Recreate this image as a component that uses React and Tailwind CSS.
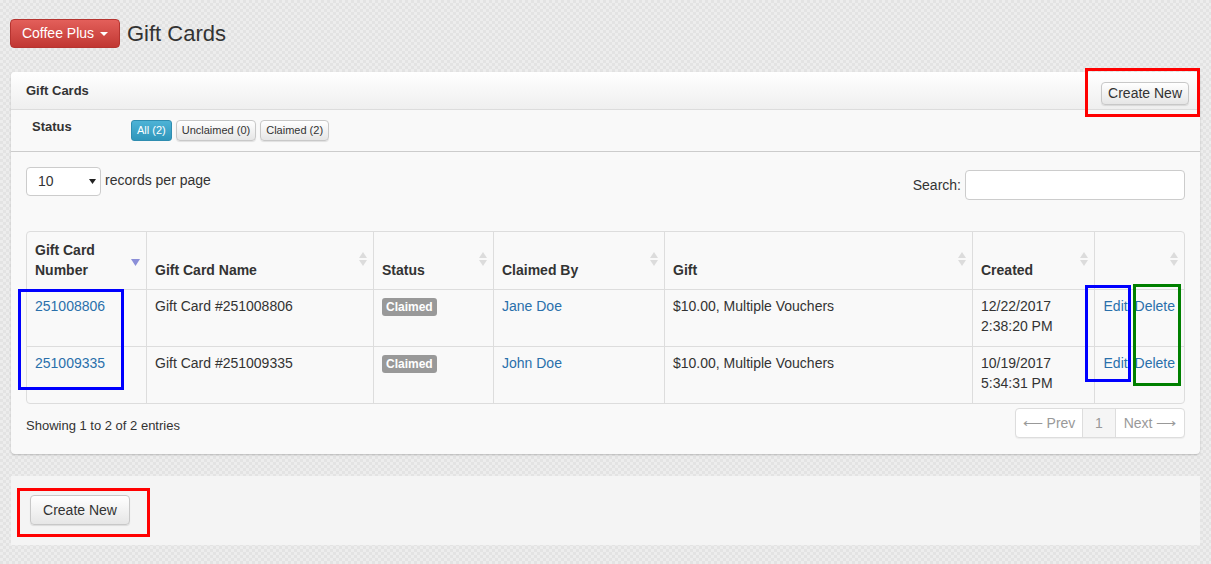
import React from 'react';

const rows = [
  { num: '251008806', name: 'Gift Card #251008806', by: 'Jane Doe', gift: '$10.00, Multiple Vouchers', date: '12/22/2017', time: '2:38:20 PM' },
  { num: '251009335', name: 'Gift Card #251009335', by: 'John Doe', gift: '$10.00, Multiple Vouchers', date: '10/19/2017', time: '5:34:31 PM' },
];

function SortIcon({ active }) {
  if (active) {
    return (
      <svg width="9" height="8" viewBox="0 0 9 8" className="absolute right-[6px] top-[27px]">
        <path d="M0 0 L9 0 L4.5 7 Z" fill="#8b8fd8" />
      </svg>
    );
  }
  return (
    <svg width="8" height="16" viewBox="0 0 8 16" className="absolute right-[6px] top-[19px]">
      <path d="M0 7 L4 1 L8 7 Z" fill="#dcdcdc" />
      <path d="M0 9 L4 15 L8 9 Z" fill="#dcdcdc" />
    </svg>
  );
}

function Th({ children, w, active, last }) {
  return (
    <th className={`relative ${w} ${last ? '' : 'border-r'} border-[#dddddd] px-2 pb-[9px] pt-2 text-left align-bottom text-[14px] font-bold leading-[20px] text-[#333]`}>
      {children}
      <SortIcon active={active} />
    </th>
  );
}

function Btn({ children, className = '' }) {
  return (
    <button className={`rounded-[4px] border border-[#c8c8c8] bg-gradient-to-b from-white to-[#e6e6e6] text-[#333] shadow-[0_1px_1px_rgba(0,0,0,0.1)] ${className}`}>
      {children}
    </button>
  );
}

export default function App() {
  return (
    <div className="relative min-h-[564px] bg-[repeating-conic-gradient(#e3e3e3_0%_25%,#ededed_0%_50%)] bg-[length:6px_6px] px-[11px] pt-[19px] pb-[18px] font-['Liberation_Sans',Arial,sans-serif] text-[14px] text-[#333]">
      <div className="flex items-center gap-[7px]">
        <button className="-ml-px flex h-[29px] w-[110px] items-center justify-center gap-[6px] rounded-[4px] border border-[#b53430] bg-gradient-to-b from-[#e35f5a] to-[#c13733] text-[14px] text-white">
          Coffee Plus
          <svg width="8" height="4" viewBox="0 0 8 4"><path d="M0 0 L8 0 L4 4 Z" fill="#fff" /></svg>
        </button>
        <h1 className="text-[22px] leading-[28px] text-[#333]">Gift Cards</h1>
      </div>

      <div className="mt-[24px] rounded-[4px] bg-[#f9f9f9] shadow-[0_1px_2px_rgba(0,0,0,0.2)]">
        <div className="flex h-[38px] items-center justify-between rounded-t-[4px] border-b border-[#dcdcdc] bg-gradient-to-b from-white to-[#efefef] pl-[15px] pr-[11px]">
          <span className="text-[13px] font-bold">Gift Cards</span>
          <Btn className="mt-[5px] h-[23px] px-[6px] text-[14px] leading-[20px]">Create New</Btn>
        </div>
        <div className="flex h-[42px] items-center border-b border-[#cccccc] bg-[#f9f9f9] pl-[21px]">
          <span className="-mt-[8px] w-[99px] text-[13px] font-bold">Status</span>
          <div className="flex gap-[4px]">
            <button className="h-[21px] rounded-[3px] border border-[#2f8db0] bg-gradient-to-b from-[#4db3d6] to-[#2f96bb] px-[5px] text-[11px] text-white">All (2)</button>
            <Btn className="h-[21px] px-[5px] text-[11px]">Unclaimed (0)</Btn>
            <Btn className="h-[21px] px-[5px] text-[11px]">Claimed (2)</Btn>
          </div>
        </div>

        <div className="px-[15px] pt-[15px] pb-[16px]">
          <div className="flex items-start justify-between">
            <div className="flex items-center gap-[4px]">
              <div className="flex h-[29px] w-[75px] items-center justify-between rounded-[4px] border border-[#cccccc] bg-white pl-[11px] pr-[4px] text-[14px]">
                <span>10</span>
                <svg width="7" height="5" viewBox="0 0 7 5"><path d="M0 0 L7 0 L3.5 5 Z" fill="#222" /></svg>
              </div>
              <span className="-mt-[2px]">records per page</span>
            </div>
            <div className="mt-[3px] flex items-center gap-[4px]">
              <span>Search:</span>
              <div className="h-[30px] w-[220px] rounded-[4px] border border-[#cccccc] bg-white" />
            </div>
          </div>

          <table className="mt-[31px] w-full border-separate border-spacing-0 overflow-hidden rounded-[4px] border border-[#dddddd] text-[14px]">
            <thead>
              <tr className="h-[56px]">
                <Th w="w-[120px]" active>Gift Card<br />Number</Th>
                <Th w="w-[227px]">Gift Card Name</Th>
                <Th w="w-[120px]">Status</Th>
                <Th w="w-[171px]">Claimed By</Th>
                <Th w="w-[308px]">Gift</Th>
                <Th w="w-[122px]">Created</Th>
                <Th last />
              </tr>
            </thead>
            <tbody>
              {rows.map((r) => (
                <tr key={r.num} className="h-[57px] align-top leading-[20px]">
                  <td className="border-r border-t border-[#dddddd] px-2 pt-[6px]"><a className="text-[#2a70ab]">{r.num}</a></td>
                  <td className="border-r border-t border-[#dddddd] px-2 pt-[6px]">{r.name}</td>
                  <td className="border-r border-t border-[#dddddd] px-2 pt-[6px]">
                    <span className="rounded-[3px] bg-[#999999] px-[4px] py-[2px] text-[12px] font-bold leading-[14px] text-white">Claimed</span>
                  </td>
                  <td className="border-r border-t border-[#dddddd] px-2 pt-[6px]"><a className="text-[#2a70ab]">{r.by}</a></td>
                  <td className="border-r border-t border-[#dddddd] px-2 pt-[6px]">{r.gift}</td>
                  <td className="border-r border-t border-[#dddddd] px-2 pt-[6px]">{r.date}<br />{r.time}</td>
                  <td className="border-t border-[#dddddd] pr-[9px] pt-[6px] text-right text-[#2a70ab]">
                    <a>Edit</a> <span className="inline-block w-[3px]" /><a>Delete</a>
                  </td>
                </tr>
              ))}
            </tbody>
          </table>

          <div className="mt-[4px] flex items-start justify-between">
            <span className="mt-[8px] text-[13px]">Showing 1 to 2 of 2 entries</span>
            <div className="flex h-[30px] overflow-hidden rounded-[4px] border border-[#dddddd] bg-white text-[14px] text-[#999999] shadow-[0_1px_1px_rgba(0,0,0,0.05)]">
              <span className="flex w-[67px] items-center justify-center border-r border-[#dddddd]">⟵ Prev</span>
              <span className="flex w-[33px] items-center justify-center border-r border-[#dddddd] bg-[#f5f5f5]">1</span>
              <span className="flex w-[68px] items-center justify-center">Next ⟶</span>
            </div>
          </div>
        </div>
      </div>

      <div className="mt-[22px] h-[69px] bg-[#f4f4f4] pl-[19px] pt-[19px]">
        <Btn className="h-[30px] w-[100px] text-[14px]">Create New</Btn>
      </div>

      {/* annotation boxes */}
      <div className="pointer-events-none absolute left-[1085px] top-[68px] h-[49px] w-[115px] border-[3px] border-[#ff0000]" />
      <div className="pointer-events-none absolute left-[17px] top-[488px] h-[49px] w-[133px] border-[3px] border-[#ff0000]" />
      <div className="pointer-events-none absolute left-[18px] top-[289px] h-[101px] w-[106px] border-[3px] border-[#0000ff]" />
      <div className="pointer-events-none absolute left-[1085px] top-[285px] h-[97px] w-[46px] border-[3px] border-[#0000ff]" />
      <div className="pointer-events-none absolute left-[1133px] top-[284px] h-[102px] w-[48px] border-[3px] border-[#008000]" />
    </div>
  );
}
